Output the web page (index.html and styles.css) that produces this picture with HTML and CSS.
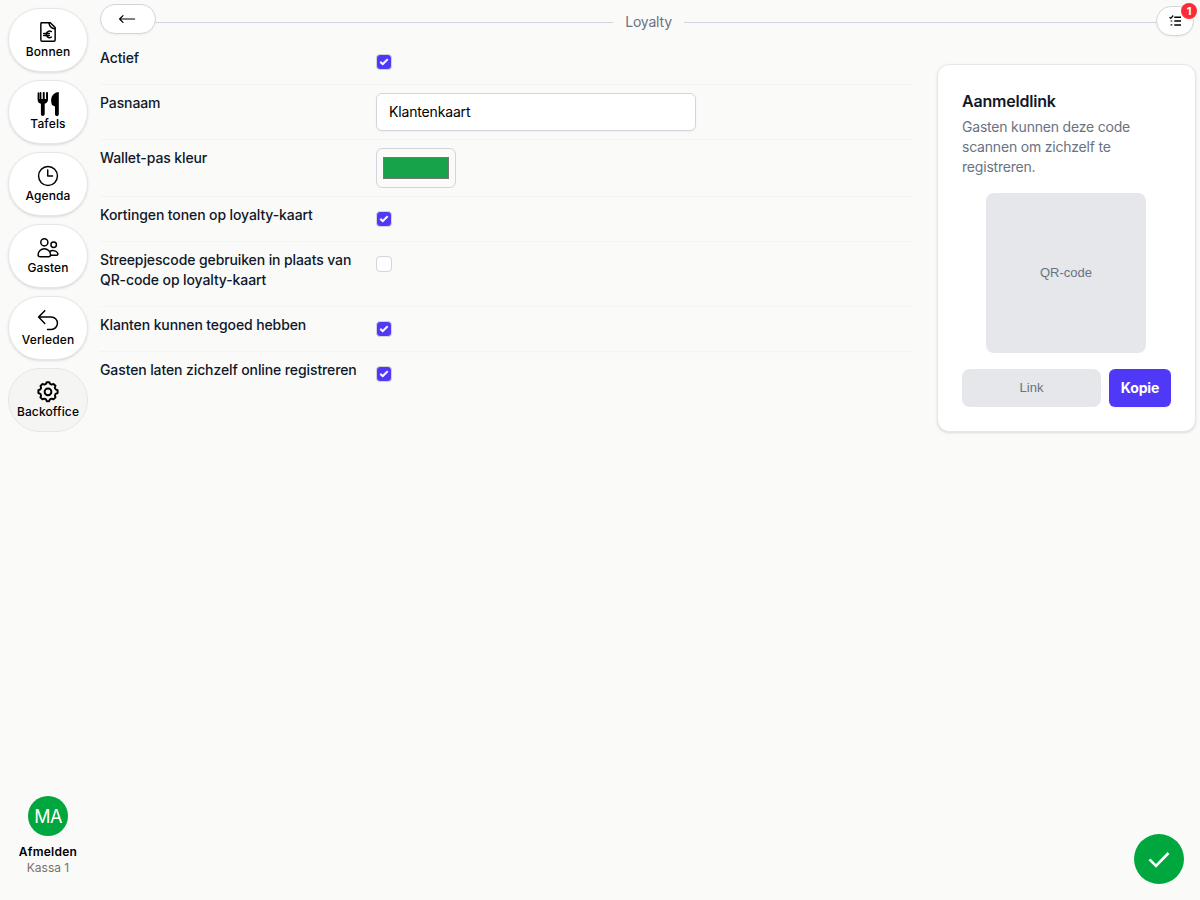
FILE: index.html
```html
<!DOCTYPE html>
<html lang="nl">
<head>
<meta charset="utf-8">
<title>Loyalty</title>
<link rel="stylesheet" href="styles.css">
</head>
<body>
<div class="app">
  <aside class="sidebar">
    <nav class="nav">
      <a class="nav-item">
        <svg class="icon" viewBox="0 0 24 24"><path d="M4.5 1.8h10l5.3 5.4v13.600a1.400 1.400 0 0 1-1.400 1.400H5.600a1.400 1.400 0 0 1-1.400-1.400V3a1.200 1.200 0 0 1 1.200-1.200z"/><path d="M13 2q.8 5.600 6.700 6.600"/><path d="M15.700 11.500a3.600 3.600 0 1 0 0 6.200M7.300 13.600h6.200M7.300 15.900h6.200"/></svg>
        <span>Bonnen</span>
      </a>
      <a class="nav-item">
        <svg class="icon cutlery" viewBox="0 0 24 24"><path d="M1.600 1v6.500c0 2.500 1.500 3.800 3.300 4.200v10.100c0 2.900 3.800 2.900 3.800 0V11.700C10.500 11.200 12 10 12 7.500V1c0-1.200-1.900-1.200-1.900 0v6H8.700V1c0-1.300-1.900-1.300-1.900 0v6H5.400V1C5.400-.2 3.500-.2 3.500 1v6h-.4V1C3.100-.1 1.600-.1 1.600 1z"/><path d="M22.800 0v22c0 2.700-3.800 2.700-3.800 0v-7.400l-3-1.700c-2.100-5.600-.4-12.200 6.800-12.900z"/></svg>
        <span>Tafels</span>
      </a>
      <a class="nav-item">
        <svg class="icon" viewBox="0 0 24 24"><circle cx="12" cy="12" r="10.300"/><path d="M11.700 5.500V12h5.200"/></svg>
        <span>Agenda</span>
      </a>
      <a class="nav-item">
        <svg class="icon" viewBox="0 0 24 24"><circle cx="8" cy="5.800" r="3.900"/><circle cx="18.200" cy="8.500" r="3"/><path d="M8 12.900c-3.600 0-6.800 2.900-6.800 6.500 0 1.400.8 2.200 2.200 2.200h9.200c1.400 0 2.200-.8 2.200-2.200 0-3.600-3.200-6.500-6.800-6.500z"/><path d="M14.200 15.900c2.400-2.400 8.600-.5 8.600 3 0 .7-.6 1.100-1.400 1.100h-6.700"/></svg>
        <span>Gasten</span>
      </a>
      <a class="nav-item">
        <svg class="icon" viewBox="0 0 24 24"><path d="M8.500 1.800 1.700 8.700l6.800 7M1.900 8.700h13.600a6.800 6.800 0 0 1 0 13.600h-4"/></svg>
        <span>Verleden</span>
      </a>
      <a class="nav-item active">
        <svg class="icon gear" viewBox="0 0 24 24"><path d="M9.800 3.100 10.600 1.300h2.800l.8 1.800 1.900.8 1.900-.7 2.200 2-.8 2.100.9 1.900 2.200.9v3l-2.200.9-.8 1.900.7 2-2.200 2.100-2-.8-1.900.8-.8 2h-2.700l-.8-2-1.900-.8-2 .8-2.200-2.100.8-2-.8-1.900-2.200-.9v-3l2.200-.9.8-1.900-.7-2 2.200-2.100 1.900.7z"/><circle cx="12" cy="11.800" r="3.700"/></svg>
        <span>Backoffice</span>
      </a>
    </nav>
    <div class="account">
      <div class="avatar">MA</div>
      <div class="logout">Afmelden</div>
      <div class="register">Kassa 1</div>
    </div>
  </aside>

  <main class="main">
    <header class="header">
      <button class="back"><svg class="back-icon" viewBox="0 0 18 12"><path d="M16.600 6H1.800M5 2.600 1.600 6 5 9.400"/></svg></button>
      <div class="rule"></div>
      <h1 class="title">Loyalty</h1>
      <div class="rule"></div>
      <button class="tasks">
        <svg class="tasks-icon" viewBox="0 0 13 12"><path d="M5.300 2.200H12M5.300 6H12M5.300 9.900H12"/><path d="m.5 2.100 1.300 1.200L4.200.5M1.600 6h1.700M1.600 9.900h1.700" class="thin"/></svg>
        <span class="badge">1</span>
      </button>
    </header>

    <div class="content">
      <form class="form">
        <div class="row"><div class="label">Actief</div><div class="check on"><svg viewBox="0 0 16 16"><path d="M12.207 4.793a1 1 0 0 1 0 1.414l-5 5a1 1 0 0 1-1.414 0l-2-2a1 1 0 0 1 1.414-1.414L6.500 9.086l4.293-4.293a1 1 0 0 1 1.414 0z"/></svg></div></div>
        <div class="row"><div class="label">Pasnaam</div><input class="text" type="text" value="Klantenkaart"></div>
        <div class="row"><div class="label">Wallet-pas kleur</div><div class="color"><div class="swatch"></div></div></div>
        <div class="row"><div class="label">Kortingen tonen op loyalty-kaart</div><div class="check on"><svg viewBox="0 0 16 16"><path d="M12.207 4.793a1 1 0 0 1 0 1.414l-5 5a1 1 0 0 1-1.414 0l-2-2a1 1 0 0 1 1.414-1.414L6.500 9.086l4.293-4.293a1 1 0 0 1 1.414 0z"/></svg></div></div>
        <div class="row"><div class="label">Streepjescode gebruiken in plaats van QR-code op loyalty-kaart</div><div class="check"></div></div>
        <div class="row"><div class="label">Klanten kunnen tegoed hebben</div><div class="check on"><svg viewBox="0 0 16 16"><path d="M12.207 4.793a1 1 0 0 1 0 1.414l-5 5a1 1 0 0 1-1.414 0l-2-2a1 1 0 0 1 1.414-1.414L6.500 9.086l4.293-4.293a1 1 0 0 1 1.414 0z"/></svg></div></div>
        <div class="row"><div class="label">Gasten laten zichzelf online registreren</div><div class="check on"><svg viewBox="0 0 16 16"><path d="M12.207 4.793a1 1 0 0 1 0 1.414l-5 5a1 1 0 0 1-1.414 0l-2-2a1 1 0 0 1 1.414-1.414L6.500 9.086l4.293-4.293a1 1 0 0 1 1.414 0z"/></svg></div></div>
      </form>

      <section class="card">
        <h2 class="card-title">Aanmeldlink</h2>
        <p class="card-text">Gasten kunnen deze code scannen om zichzelf te registreren.</p>
        <div class="qr">QR-code</div>
        <div class="share">
          <div class="link">Link</div>
          <button class="copy">Kopie</button>
        </div>
      </section>
    </div>
  </main>
</div>
<button class="save"><svg class="save-icon" viewBox="0 0 24 24"><path d="m2.500 12.300 6.500 6.500L21.500 6"/></svg></button>
</body>
</html>
```

FILE: styles.css
```css
* { box-sizing: border-box; }
body {
  margin: 0;
  background: #fafaf9;
  color: #000;
  font: 14px/20px Inter, "Liberation Sans", sans-serif;
}
h1, h2, p { margin: 0; }
button { font: inherit; padding: 0; }
svg { display: block; }

.app { display: flex; height: 900px; overflow: hidden; }

.sidebar {
  width: 96px;
  padding: 8px 8px 24px;
  display: flex;
  flex-direction: column;
  justify-content: space-between;
  flex: none;
}
.nav { display: flex; flex-direction: column; gap: 8px; }
.nav-item {
  height: 64px;
  display: flex;
  flex-direction: column;
  align-items: center;
  padding-top: 12px;
  border: 1px solid #e5e7eb;
  border-radius: 32px;
  background: #fff;
  box-shadow: 0 1px 3px rgba(0, 0, 0, .1), 0 1px 2px -1px rgba(0, 0, 0, .1);
  font-size: 12px;
  line-height: 16px;
  font-weight: 500;
  letter-spacing: .12px;
}
.nav-item.active { background: #f5f5f4; box-shadow: none; }
.icon {
  width: 22px;
  height: 22px;
  margin-bottom: 1px;
  overflow: visible;
  fill: none;
  stroke: #000;
  stroke-width: 1.6;
  stroke-linecap: round;
  stroke-linejoin: round;
}
.cutlery { width: 24px; height: 24px; margin: -1px 0 0; fill: #000; stroke: none; }
.gear { stroke-width: 2.1; }

.account { display: flex; flex-direction: column; align-items: center; }
.avatar {
  width: 40px;
  height: 40px;
  border-radius: 50%;
  background: #00a63e;
  color: #fff;
  font-size: 18px;
  line-height: 41px;
  letter-spacing: -.7px;
  text-align: center;
}
.logout { margin-top: 8px; font-size: 12px; line-height: 16px; font-weight: 600; letter-spacing: .25px; }
.register { font-size: 12px; line-height: 16px; color: #79716b; }

.main { flex: 1; padding: 4px 4px 0 0; }
.header { display: flex; height: 36px; padding-left: 4px; }
.back {
  position: relative;
  width: 56px;
  height: 30px;
  margin-right: -15px;
  display: flex;
  align-items: center;
  justify-content: center;
  border: 1px solid #d1d5dc;
  border-radius: 15px;
  background: #fff;
  box-shadow: 0 1px 2px rgba(0, 0, 0, .05);
}
.back-icon { width: 18px; height: 12px; margin-right: 2px; fill: none; stroke: #000; stroke-width: 1.2; stroke-linecap: round; stroke-linejoin: round; }
.rule { flex: 1; height: 1px; margin-top: 18px; background: #d1d5dc; }
.title { padding: 0 12px; margin-top: 8px; font-size: 14px; line-height: 20px; font-weight: 400; letter-spacing: -.2px; color: #6a7282; }
.tasks {
  position: relative;
  width: 38px;
  height: 30px;
  margin: 2px 2px 0 0;
  display: flex;
  align-items: center;
  justify-content: center;
  border: 1px solid #d1d5dc;
  border-radius: 15px;
  background: #fff;
  box-shadow: 0 1px 2px rgba(0, 0, 0, .05);
}
.tasks-icon { width: 13px; height: 12px; fill: none; stroke: #000; stroke-width: 1.5; }
.thin { stroke-width: 1.2; }
.badge {
  position: absolute;
  top: -4px;
  right: -4px;
  width: 16px;
  height: 16px;
  border-radius: 50%;
  background: #fb2c36;
  color: #fff;
  font-size: 11px;
  line-height: 16px;
  font-weight: 700;
}

.content { display: flex; align-items: flex-start; justify-content: space-between; padding-left: 4px; }
.form { width: 812px; }
.row {
  display: grid;
  grid-template-columns: 260px 1fr;
  column-gap: 16px;
  align-items: start;
  padding: 8px 0;
  border-bottom: 1px solid #f3f4f6;
}
.row:last-child { border-bottom: 0; }
.label { padding-bottom: 8px; font-weight: 500; letter-spacing: -.11px; color: #101828; }
.check {
  width: 16px;
  height: 16px;
  margin-top: 6px;
  border: 1px solid #d1d5dc;
  border-radius: 4px;
  background: #fff;
}
.check.on { background: #4f39f6; }
.check svg { width: 14px; height: 14px; fill: #fff; stroke: #fff; stroke-width: .5; }
.text {
  width: 320px;
  height: 38px;
  padding: 0 12px 1px;
  border: 1px solid #d1d5dc;
  border-radius: 6px;
  background: #fff;
  color: #000;
  font: inherit;
  letter-spacing: -.16px;
  box-shadow: 0 1px 2px rgba(0, 0, 0, .05);
}
.color { width: 80px; height: 40px; padding: 8px 6px; border: 1px solid #d1d5dc; border-radius: 6px; }
.swatch { height: 22px; border: 1px solid #777; background: #16a34a; }

.card {
  width: 259px;
  margin-top: 24px;
  padding: 24px;
  border: 1px solid #e5e7eb;
  border-radius: 12px;
  background: #fff;
  box-shadow: 0 1px 3px rgba(0, 0, 0, .1), 0 1px 2px -1px rgba(0, 0, 0, .1);
}
.card-title { font-size: 16px; line-height: 24px; font-weight: 600; letter-spacing: -.2px; color: #101828; }
.card-text { margin-top: 4px; letter-spacing: -.2px; color: #6a7282; }
.qr, .link {
  display: flex;
  align-items: center;
  justify-content: center;
  border-radius: 8px;
  background: #e5e7eb;
  color: #6a7282;
  font: 13px/16px "Liberation Sans", sans-serif;
}
.qr { width: 160px; height: 160px; margin: 16px 0 16px 24px; }
.share { display: flex; gap: 8px; }
.link { flex: 1; height: 38px; }
.copy {
  width: 62px;
  height: 38px;
  border: 0;
  border-radius: 6px;
  background: #4f39f6;
  color: #fff;
  font-weight: 700;
  letter-spacing: -.15px;
  box-shadow: 0 1px 2px rgba(0, 0, 0, .05);
}

.save {
  position: fixed;
  right: 16px;
  bottom: 16px;
  width: 50px;
  height: 50px;
  display: flex;
  align-items: center;
  justify-content: center;
  border: 0;
  border-radius: 50%;
  background: #00a63e;
}
.save-icon { width: 24px; height: 24px; fill: none; stroke: #fff; stroke-width: 2.600; }
```
